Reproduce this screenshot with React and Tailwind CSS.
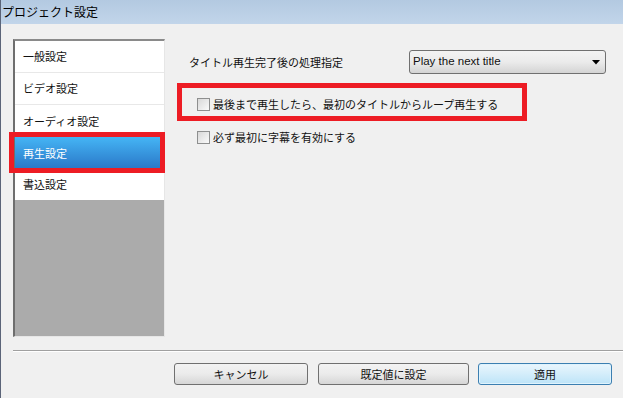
import React from 'react';

const jp = { fontFamily: '"Noto Sans CJK JP", "Noto Sans", sans-serif' };

const items = ['一般設定', 'ビデオ設定', 'オーディオ設定', '再生設定', '書込設定'];

const Checkbox = ({ label }) => (
  <div className="flex items-center h-[14px] pl-[8px]">
    <span className="w-[13px] h-[13px] border border-[#8e8f8f] bg-gradient-to-br from-[#d8d8d8] to-[#fafafa] shrink-0" />
    <span className="ml-[3px] text-[11px] leading-none text-[#111]">{label}</span>
  </div>
);

const Button = ({ children, primary, wide }) => (
  <button
    className={`${wide ? 'w-[151px]' : 'w-[134px]'} h-[22px] rounded-[3px] border text-[11px] text-[#111] ${
      primary
        ? 'border-[#3c7fb1] bg-gradient-to-b from-[#eaf6fd] to-[#bde4f8] shadow-[inset_0_0_0_1px_#dff3fd]'
        : 'border-[#707070] bg-gradient-to-b from-[#f3f3f3] via-[#ebebeb] to-[#d6d6d6]'
    }`}
  >
    {children}
  </button>
);

export default function App() {
  return (
    <div className="relative w-[623px] h-[398px] bg-[#f0f0f0] overflow-hidden" style={jp}>
      {/* title bar */}
      <div className="h-[24px] bg-gradient-to-b from-[#b3c9e1] to-[#c2d5ea] border-l border-[#5b6478] flex items-center pl-[1px]">
        <span className="text-[12px] text-[#000] leading-none">プロジェクト設定</span>
      </div>

      <div className="border-l border-[#5b6478] h-[374px] pl-[12px]">
        <div className="flex pt-[15px]">
          {/* list */}
          <div className="w-[152px] h-[298px] flex flex-col border-l-2 border-t-2 border-l-[#6e6e6e] border-t-[#8a8a8a] border-r border-b border-r-[#e6e6e6] border-b-[#e6e6e6] bg-[#ababab]">
            {items.map((it, i) => (
              <div
                key={it}
                className={`${i === 4 ? 'h-[31px]' : 'h-[32px]'} flex items-center pl-[8px] text-[11px] ${
                  i === 3
                    ? 'bg-gradient-to-b from-[#45b5f5] to-[#2b77c7] text-white'
                    : 'bg-white text-[#111]'
                } ${i < 2 ? 'border-b border-[#e8e8e8]' : ''}`}
              >
                {it}
              </div>
            ))}
          </div>

          {/* right panel */}
          <div className="flex-1 pl-[24px] pt-[11px] flex flex-col">
            <div className="flex items-center h-[24px]">
              <span className="w-[220px] text-[11px] text-[#111]">タイトル再生完了後の処理指定</span>
              <div className="w-[197px] h-[24px] rounded-[3px] border border-[#707070] bg-gradient-to-b from-[#f3f3f3] via-[#ebebeb] to-[#d4d4d4] flex items-center justify-between pl-[3px] pr-[5px]">
                <span className="text-[11.5px] text-[#111]" style={{ fontFamily: '"Liberation Sans", sans-serif' }}>
                  Play the next title
                </span>
                <svg width="8" height="5" viewBox="0 0 8 5">
                  <path d="M0 0H8L4 4.5Z" fill="#000" />
                </svg>
              </div>
            </div>
            <div className="mt-[23px] flex flex-col gap-[19px]">
              <Checkbox label="最後まで再生したら、最初のタイトルからループ再生する" />
              <Checkbox label="必ず最初に字幕を有効にする" />
            </div>
          </div>
        </div>

        {/* separator */}
        <div className="mt-[13px] h-px bg-[#a0a0a0] border-b border-white box-content" />

        {/* buttons */}
        <div className="flex justify-end pt-[11px] pr-[11px]">
          <Button>キャンセル</Button>
          <div className="w-[10px]" />
          <Button wide>既定値に設定</Button>
          <div className="w-[9px]" />
          <Button primary>適用</Button>
        </div>
      </div>

      {/* red highlight boxes */}
      <div className="absolute left-[9px] top-[132px] w-[156px] h-[41px] border-[5px] border-[#ed1c24]" />
      <div className="absolute left-[177px] top-[83px] w-[350px] h-[38px] border-[5px] border-[#ed1c24]" />
    </div>
  );
}
